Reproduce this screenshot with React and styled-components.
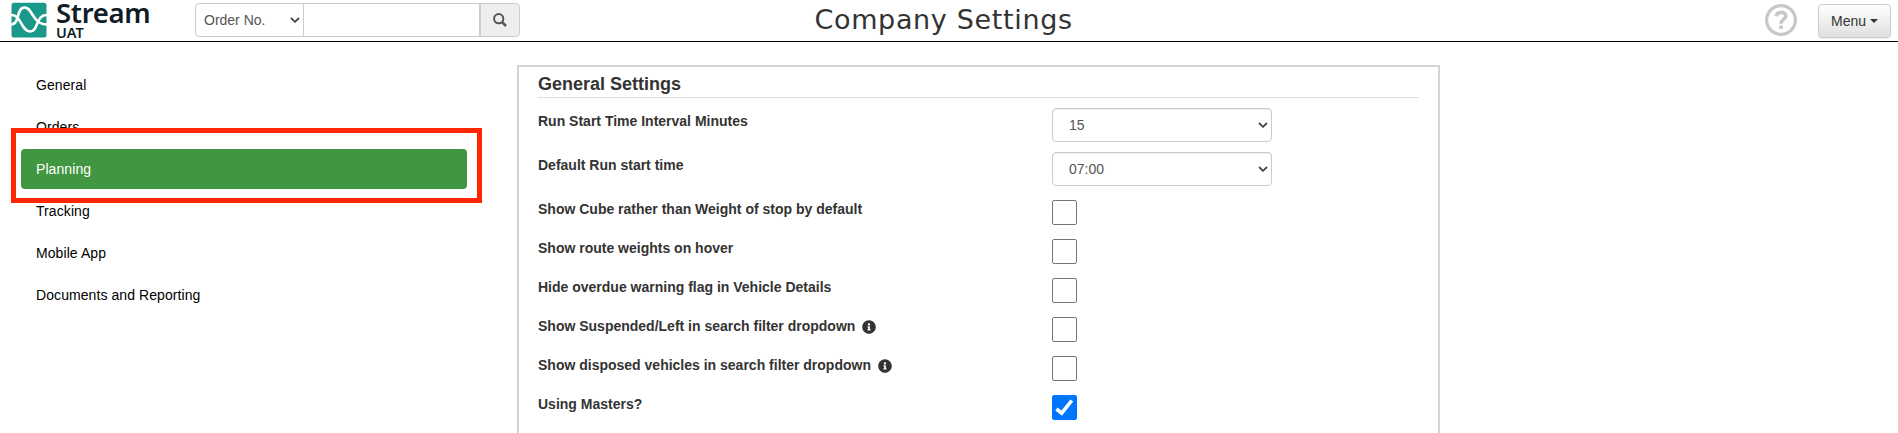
import React, { useState } from 'react'
import styled, { createGlobalStyle } from 'styled-components';
import { FaInfoCircle } from 'react-icons/fa';

const GlobalStyle = createGlobalStyle`
  * { box-sizing: border-box; }
  body {
    margin: 0;
    background: #fff;
    color: #333;
    font-family: "Liberation Sans", Arial, sans-serif;
    font-size: 14px;
    line-height: 20px;
    overflow: hidden;
  }
`
const Page = styled.div`
  height: 433px;
  overflow: hidden;
`
const Header = styled.header`
  display: grid;
  grid-template-columns: 195px 325px 1fr auto;
  height: 42px;
  border-bottom: 1px solid #000;
`
const Brand = styled.a`
  display: flex;
  gap: 9px;
  padding: 2px 0 0 11px;
  color: #101c26;
  font-family: "Noto Sans", sans-serif;
`
const BrandText = styled.div`
  display: flex;
  flex-direction: column;
  .name {
    font-size: 27.5px;
    font-weight: 600;
    line-height: 22px;
    letter-spacing: -0.3px;
  }
  .env {
    margin-top: 1px;
    font-size: 14.5px;
    font-weight: 600;
    line-height: 14px;
  }
`
const SearchGroup = styled.form`
  display: flex;
  height: 34px;
  margin-top: 3px;
  border: 1px solid #ccc;
  border-radius: 4px;
  overflow: hidden;
`
const SearchType = styled.div`
  display: flex;
  align-items: center;
  justify-content: space-between;
  width: 108px;
  padding: 0 3px 0 8px;
  border-right: 1px solid #ccc;
  color: #555;
`
const SearchInput = styled.input`
  flex: 1;
  min-width: 0;
  border: 0;
  outline: 0;
  padding: 6px 12px;
  color: #555;
  font: inherit;
`
const SearchButton = styled.button`
  display: flex;
  align-items: center;
  justify-content: center;
  width: 40px;
  padding: 0;
  border: 0;
  border-left: 2px solid #ccc;
  background: #eee;
`
const Title = styled.h1`
  margin: 0;
  padding-left: 294.5px;
  font-family: "DejaVu Sans", Verdana, sans-serif;
  font-size: 27px;
  font-weight: 400;
  line-height: 40px;
  letter-spacing: 0.65px;
  white-space: nowrap;
`
const HeaderActions = styled.div`
  display: flex;
  align-items: flex-start;
  gap: 21px;
  padding: 4px 7px 0 0;
`
const MenuButton = styled.button`
  display: flex;
  align-items: center;
  gap: 4px;
  width: 73px;
  height: 34px;
  padding: 0 12px;
  border: 1px solid #ccc;
  border-radius: 4px;
  background: linear-gradient(#fff, #e0e0e0);
  box-shadow: inset 0 1px 0 rgba(255, 255, 255, 0.15), 0 1px 1px rgba(0, 0, 0, 0.075);
  color: #333;
  font: inherit;
  &::after {
    content: "";
    border: 4px solid transparent;
    border-top-color: #333;
    border-bottom: 0;
  }
`
const Main = styled.main`
  display: grid;
  grid-template-columns: 446px 923px;
  gap: 50px;
  padding: 23px 0 0 21px;
`
const Nav = styled.nav`
  display: flex;
  flex-direction: column;
  gap: 2px;
  letter-spacing: 0.08px;
`
const NavItem = styled.a`
  position: relative;
  height: 40px;
  padding: 10px 15px;
  border-radius: 4px;
  background: ${p => p.$active ? "#419641" : "transparent"};
  color: ${p => p.$active ? "#fff" : "#000"};
  cursor: pointer;
`
/* outline drawn over the neighbouring items */
const Highlight = styled.span`
  position: absolute;
  z-index: 2;
  inset: -21px -15px -14px -10px;
  border: 5px solid #ff2600;
  pointer-events: none;
`
const Panel = styled.section`
  height: 400px;
  padding: 7px 19px 0;
  border: 2px solid #d3d3d3;
`
const PanelTitle = styled.h2`
  margin: 0 0 10px;
  height: 24px;
  border-bottom: 1px solid #ddd;
  font-size: 18px;
  font-weight: 700;
  line-height: 20px;
`
const Row = styled.div`
  display: grid;
  grid-template-columns: 514px 220px;
  align-items: start;
  margin-bottom: 10px;
`
const Label = styled.label`
  display: flex;
  align-items: center;
  gap: 7px;
  padding-top: 3px;
  font-weight: 700;
  svg {
    margin-top: 2px;
  }
`
const SelectBox = styled.div`
  display: flex;
  align-items: center;
  justify-content: space-between;
  height: 34px;
  padding: 0 3px 0 16px;
  border: 1px solid #ccc;
  border-radius: 4px;
  box-shadow: inset 0 1px 1px rgba(0, 0, 0, 0.075);
  color: #555;
`
const Check = styled.button`
  display: flex;
  width: 25px;
  height: 25px;
  margin-top: 4px;
  padding: 0;
  border: 1px solid ${p => p.$checked ? "#0075ff" : "#767676"};
  border-radius: 2px;
  background: ${p => p.$checked ? "#0075ff" : "#fff"};
`

const Logo = () => (
  <svg width="36" height="36" viewBox="0 0 36 36">
    <rect x="0.5" y="0.7" width="35" height="34.8" rx="2.5" fill="#1a998a" />
    <g fill="none" stroke="#fff" strokeWidth="2.6">
      <path d="M0 22.500C9 22.500 5 5.500 13.500 5.500S21 22.500 36 22.500" />
      <path d="M0 13C11 13 10 29.500 19 29.500S24 13 36 13" />
    </g>
  </svg>
)
const Arrow = () => (
  <svg width="10" height="6" viewBox="0 0 10 6">
    <path d="M1 1l4 3.800L9 1" fill="none" stroke="#444" strokeWidth="1.800" />
  </svg>
)
const SearchIcon = () => (
  <svg width="14" height="14" viewBox="0 0 14 14" fill="none" stroke="#555">
    <circle cx="5.700" cy="5.700" r="4.600" strokeWidth="2" />
    <path d="M9 9l4 4" strokeWidth="2.500" />
  </svg>
)
const HelpIcon = () => (
  <svg width="32" height="32" viewBox="0 0 32 32" fill="none" stroke="#c8c8c8">
    <circle cx="16" cy="16" r="14.400" strokeWidth="3.200" />
    <path d="M11.300 12.200C11.800 7.200 20.800 7.200 20.800 12C20.800 15.500 16 15.300 16 19.800" strokeWidth="3.600" />
    <path d="M16 21.500v3.400" strokeWidth="3.800" />
  </svg>
)
const Tick = () => (
  <svg width="23" height="23" viewBox="0 0 23 23">
    <path d="M3.500 13L8.700 17.200L18.800 4.500" fill="none" stroke="#fff" strokeWidth="3.600" />
  </svg>
)

const navItems = ["General", "Orders", "Planning", "Tracking", "Mobile App", "Documents and Reporting"]
const selects = [
  { label: "Run Start Time Interval Minutes", value: "15" },
  { label: "Default Run start time", value: "07:00" },
]
const checks = [
  { label: "Show Cube rather than Weight of stop by default" },
  { label: "Show route weights on hover" },
  { label: "Hide overdue warning flag in Vehicle Details" },
  { label: "Show Suspended/Left in search filter dropdown", info: true },
  { label: "Show disposed vehicles in search filter dropdown", info: true },
  { label: "Using Masters?" },
]

const App = () => {
  const [active, setActive] = useState("Planning");
  const [checked, setChecked] = useState({ "Using Masters?": true });

  const toggle = (label) => setChecked(prev => ({ ...prev, [label]: !prev[label] }));

  return (
    <Page>
      <GlobalStyle />
      <Header>
        <Brand>
          <Logo />
          <BrandText>
            <span className="name">Stream</span>
            <span className="env">UAT</span>
          </BrandText>
        </Brand>
        <SearchGroup onSubmit={e => e.preventDefault()}>
          <SearchType>Order No.<Arrow /></SearchType>
          <SearchInput />
          <SearchButton><SearchIcon /></SearchButton>
        </SearchGroup>
        <Title>Company Settings</Title>
        <HeaderActions>
          <HelpIcon />
          <MenuButton>Menu</MenuButton>
        </HeaderActions>
      </Header>
      <Main>
        <Nav>
          {navItems.map(item => (
            <NavItem key={item} $active={item === active} onClick={() => setActive(item)}>
              {item}
              {item === active && <Highlight />}
            </NavItem>
          ))}
        </Nav>
        <Panel>
          <PanelTitle>General Settings</PanelTitle>
          {selects.map(s => (
            <Row key={s.label}>
              <Label>{s.label}</Label>
              <SelectBox>{s.value}<Arrow /></SelectBox>
            </Row>
          ))}
          {checks.map(c => (
            <Row key={c.label}>
              <Label>{c.label}{c.info && <FaInfoCircle size={14} />}</Label>
              <Check type="button" $checked={checked[c.label]} onClick={() => toggle(c.label)}>
                {checked[c.label] && <Tick />}
              </Check>
            </Row>
          ))}
        </Panel>
      </Main>
    </Page>
  )
}

export default App
